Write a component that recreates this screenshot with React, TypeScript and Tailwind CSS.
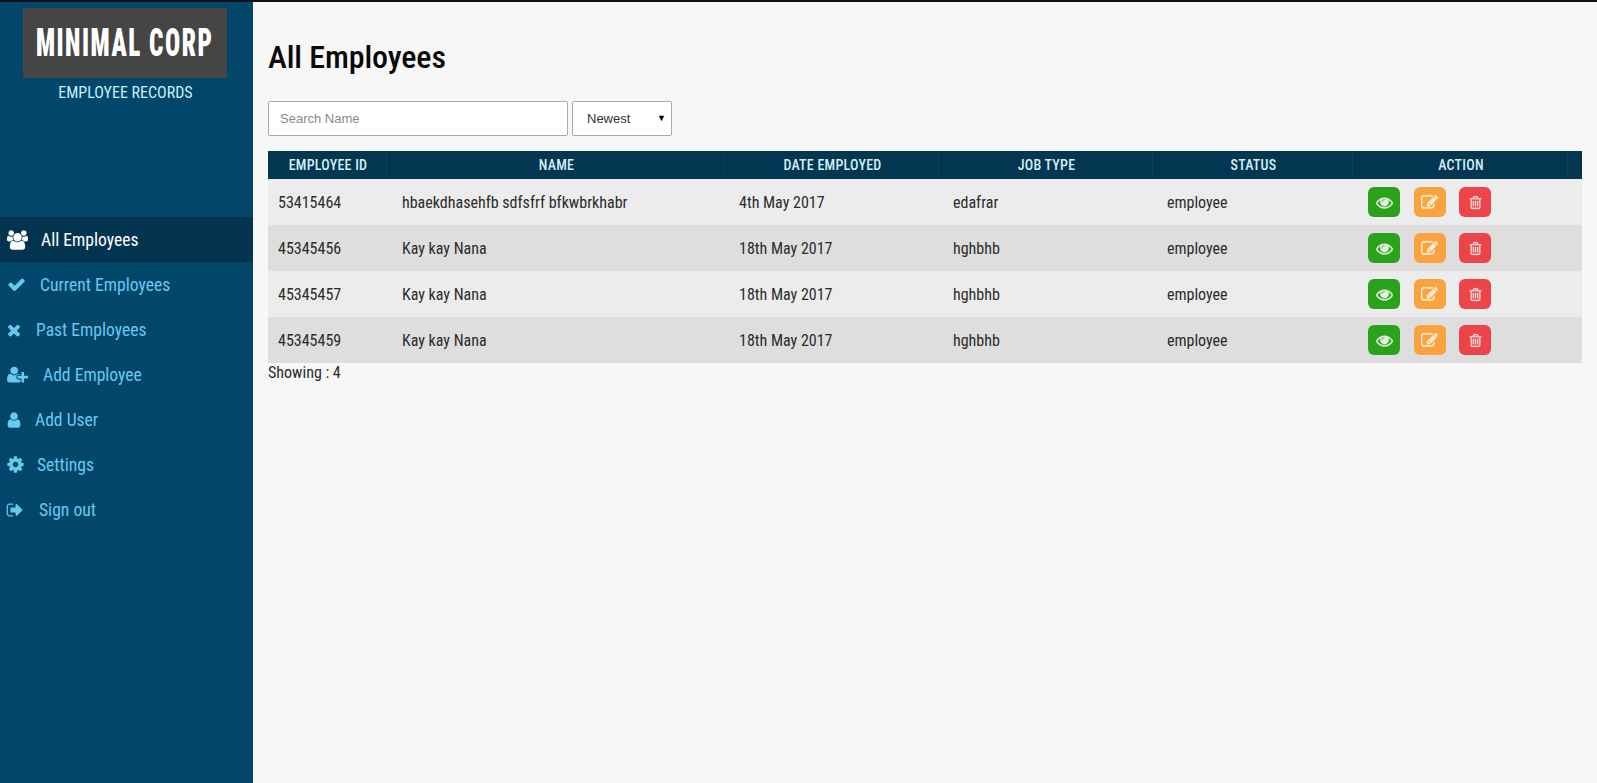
// font awesome 4 glyph shapes, the icon packages only carry the newer ones
const glyphs = {
  users: { w: 1920, d: "M593 896q-162 5-265 128h-134q-82 0-138-40.5t-56-118.5q0-353 124-353 6 0 43.5 21t97.5 42.5 119 21.5q67 0 133-23-5 37-5 66 0 139 81 256zm1071 637q0 120-73 189.5t-194 69.5h-874q-121 0-194-69.5t-73-189.5q0-53 3.5-103.5t14-109 26.5-108.5 43-97.5 62-81 85.5-53.5 111.5-20q10 0 43 21.5t73 48 107 48 135 21.5 135-21.5 107-48 73-48 43-21.5q61 0 111.5 20t85.5 53.5 62 81 43 97.5 26.5 108.5 14 109 3.5 103.5zm-1024-1277q0 106-75 181t-181 75-181-75-75-181 75-181 181-75 181 75 75 181zm704 384q0 159-112.5 271.5t-271.5 112.5-271.5-112.5-112.5-271.5 112.5-271.5 271.5-112.5 271.5 112.5 112.5 271.5zm576 225q0 78-56 118.5t-138 40.5h-134q-103-123-265-128 81-117 81-256 0-29-5-66 66 23 133 23 59 0 119-21.5t97.5-42.5 43.5-21q124 0 124 353zm-128-609q0 106-75 181t-181 75-181-75-75-181 75-181 181-75 181 75 75 181z" },
  check: { w: 1792, d: "M1671 566q0 40-28 68l-724 724-136 136q-28 28-68 28t-68-28l-136-136-362-362q-28-28-28-68t28-68l136-136q28-28 68-28t68 28l294 295 656-657q28-28 68-28t68 28l136 136q28 28 28 68z" },
  times: { w: 1792, d: "M1490 1322q0 40-28 68l-136 136q-28 28-68 28t-68-28l-294-294-294 294q-28 28-68 28t-68-28l-136-136q-28-28-28-68t28-68l294-294-294-294q-28-28-28-68t28-68l136-136q28-28 68-28t68 28l294 294 294-294q28-28 68-28t68 28l136 136q28 28 28 68t-28 68l-294 294 294 294q28 28 28 68z" },
  userPlus: { w: 2048, d: "M704 896q-159 0-271.5-112.5t-112.5-271.5 112.5-271.5 271.5-112.5 271.5 112.5 112.5 271.5-112.5 271.5-271.5 112.5zm960 128h352q13 0 22.5 9.5t9.5 22.5v192q0 13-9.5 22.5t-22.5 9.5h-352v352q0 13-9.5 22.5t-22.5 9.5h-192q-13 0-22.5-9.5t-9.5-22.5v-352h-352q-13 0-22.5-9.5t-9.5-22.5v-192q0-13 9.5-22.5t22.5-9.5h352v-352q0-13 9.5-22.5t22.5-9.5h192q13 0 22.5 9.5t9.5 22.5v352zm-736 224q0 52 38 90t90 38h256v238q-68 50-171 50h-874q-121 0-194-69.5t-73-189.5q0-53 3.5-103.5t14-109 26.5-108.5 43-97.5 62-81 85.5-53.5 111.5-20q19 0 39 17 79 61 154.5 91.5t164.5 30.5 164.5-30.5 154.5-91.5q20-17 39-17 132 0 217 96h-223q-52 0-90 38t-38 90v192z" },
  user: { w: 1792, d: "M1536 1399q0 109-62.5 187t-150.5 78h-854q-88 0-150.5-78t-62.5-187q0-85 8.5-160.5t31.5-152 58.5-131 94-89 134.5-34.5q131 128 313 128t313-128q76 0 134.5 34.5t94 89 58.5 131 31.5 152 8.5 160.5zm-256-887q0 159-112.5 271.5t-271.5 112.5-271.5-112.5-112.5-271.5 112.5-271.5 271.5-112.5 271.5 112.5 112.5 271.5z" },
  cog: { w: 1792, d: "M1152 896q0-106-75-181t-181-75-181 75-75 181 75 181 181 75 181-75 75-181zm512-109v222q0 12-8 23t-20 13l-185 28q-19 54-39 91 35 50 107 138 10 12 10 25t-9 23q-27 37-99 108t-94 71q-12 0-26-9l-138-108q-44 23-91 38-16 136-29 186-7 28-36 28h-222q-14 0-24.5-8.5t-11.5-21.5l-28-184q-49-16-90-37l-141 107q-10 9-25 9-14 0-25-11-126-114-165-168-7-10-7-23 0-12 8-23 15-21 51-66.5t54-70.5q-27-50-41-99l-183-27q-13-2-21-12.5t-8-23.5v-222q0-12 8-23t19-13l186-28q14-46 39-92-40-57-107-138-10-12-10-24 0-10 9-23 26-36 98.5-107.5t94.5-71.5q13 0 26 10l138 107q44-23 91-38 16-136 29-186 7-28 36-28h222q14 0 24.5 8.5t11.5 21.5l28 184q49 16 90 37l142-107q9-9 24-9 13 0 25 10 129 119 165 170 7 8 7 22 0 12-8 23-15 21-51 66.5t-54 70.5q26 50 41 98l183 28q13 2 21 12.5t8 23.5z" },
  signOut: { w: 1792, d: "M704 1440q0 4 1 20t.5 26.5-3 23.5-10 19.5-20.5 6.5h-320q-119 0-203.5-84.5t-84.5-203.5v-704q0-119 84.5-203.5t203.5-84.5h320q13 0 22.5 9.5t9.5 22.5q0 4 1 20t.5 26.5-3 23.5-10 19.5-20.5 6.5h-320q-66 0-113 47t-47 113v704q0 66 47 113t113 47h312l11.5 1 11.5 3 8 5.5 7 9 2 13.5zm928-544q0 26-19 45l-544 544q-19 19-45 19t-45-19-19-45v-288h-448q-26 0-45-19t-19-45v-384q0-26 19-45t45-19h448v-288q0-26 19-45t45-19 45 19l544 544q19 19 19 45z" },
  eye: { w: 1792, d: "M1664 960q-152-236-381-353 61 104 61 225 0 185-131.5 316.5t-316.5 131.5-316.5-131.5-131.5-316.5q0-121 61-225-229 117-381 353 133 205 333.5 326.5t434.5 121.5 434.5-121.5 333.5-326.5zm-720-384q0-20-14-34t-34-14q-125 0-214.5 89.5t-89.5 214.5q0 20 14 34t34 14 34-14 14-34q0-86 61-147t147-61q20 0 34-14t14-34zm848 384q0 34-20 69-140 230-376.5 368.5t-499.5 138.5-499.5-139-376.5-368q-20-35-20-69t20-69q140-229 376.5-368t499.5-139 499.5 139 376.5 368q20 35 20 69z" },
  edit: { w: 1792, d: "M888 1184l116-116-152-152-116 116v56h96v96h56zm440-720q-16-16-33 1l-350 350q-17 17-1 33t33-1l350-350q17-17 1-33zm80 594v190q0 119-84.5 203.5t-203.5 84.5h-832q-119 0-203.5-84.5t-84.5-203.5v-832q0-119 84.5-203.5t203.5-84.5h832q63 0 117 25 15 7 18 23 3 17-9 29l-49 49q-14 14-32 8-23-6-45-6h-832q-66 0-113 47t-47 113v832q0 66 47 113t113 47h832q66 0 113-47t47-113v-126q0-13 9-22l64-64q15-15 35-7t20 29zm-96-738l288 288-672 672h-288v-288zm444 132l-92 92-288-288 92-92q28-28 68-28t68 28l152 152q28 28 28 68t-28 68z" },
  trash: { w: 1792, d: "M704 736v576q0 14-9 23t-23 9h-64q-14 0-23-9t-9-23v-576q0-14 9-23t23-9h64q14 0 23 9t9 23zm256 0v576q0 14-9 23t-23 9h-64q-14 0-23-9t-9-23v-576q0-14 9-23t23-9h64q14 0 23 9t9 23zm256 0v576q0 14-9 23t-23 9h-64q-14 0-23-9t-9-23v-576q0-14 9-23t23-9h64q14 0 23 9t9 23zm128 724v-948h-896v948q0 22 7 40.5t14.5 27 10.5 8.5h832q3 0 10.5-8.5t14.5-27 7-40.5zm-672-1076h448l-48-117q-7-9-17-11h-317q-10 2-17 11zm928 32v64q0 14-9 23t-23 9h-96v948q0 83-47 143.5t-113 60.5h-832q-66 0-113-58.5t-47-141.5v-952h-96q-14 0-23-9t-9-23v-64q0-14 9-23t23-9h309l70-167q15-37 54-63t79-26h320q40 0 79 26t54 63l70 167h309q14 0 23 9t9 23z" },
};

function Glyph({ name, className }: { name: keyof typeof glyphs; className: string }) {
  const g = glyphs[name];
  return (
    <svg viewBox={`0 0 ${g.w} 1792`} fill="currentColor" className={`shrink-0 ${className}`}>
      <path d={g.d} />
    </svg>
  );
}

const navItems = [
  { label: "All Employees", icon: "users", size: "h-[20px] w-[21px]", gap: "ml-[13px]", active: true },
  { label: "Current Employees", icon: "check", size: "h-[19px] w-[19px]", gap: "ml-[14px]" },
  { label: "Past Employees", icon: "times", size: "-ml-[2px] h-[18px] w-[18px]", gap: "ml-[13px]" },
  { label: "Add Employee", icon: "userPlus", size: "h-[19px] w-[21px]", gap: "ml-[15px]" },
  { label: "Add User", icon: "user", size: "-ml-[2.5px] h-[18px] w-[18px]", gap: "ml-[12.5px]" },
  { label: "Settings", icon: "cog", size: "-ml-[1px] h-[19px] w-[19px]", gap: "ml-[12px]" },
  { label: "Sign out", icon: "signOut", size: "-ml-[1.5px] h-[18px] w-[18px]", gap: "ml-[15.5px]" },
] as const;

const rows = [
  { id: "53415464", name: "hbaekdhasehfb sdfsfrf bfkwbrkhabr", date: "4th May 2017", job: "edafrar" },
  { id: "45345456", name: "Kay kay Nana", date: "18th May 2017", job: "hghbhb" },
  { id: "45345457", name: "Kay kay Nana", date: "18th May 2017", job: "hghbhb" },
  { id: "45345459", name: "Kay kay Nana", date: "18th May 2017", job: "hghbhb" },
];

const columns = "grid grid-cols-[119px_338px_214px_214px_200px_215px_14px]";
const headers = ["EMPLOYEE ID", "NAME", "DATE EMPLOYED", "JOB TYPE", "STATUS", "ACTION"];

export default function App() {
  return (
    <div className="flex h-[783px] w-[1597px] overflow-hidden border-t-2 border-[#111] bg-[#f7f7f7] font-['Roboto',sans-serif] [font-stretch:75%]">
      <aside className="flex w-[253px] shrink-0 flex-col bg-[#024769]">
        <div className="ml-[23px] mt-[6px] flex h-[70px] w-[204px] items-center justify-center bg-[#454545]">
          <span className="scale-x-[0.84] scale-y-[1.27] whitespace-nowrap text-[30px] font-black leading-none tracking-[1.8px] text-white">
            MINIMAL CORP
          </span>
        </div>
        <div className="mt-[5px] pr-[2px] text-center text-[16px] leading-[20px] text-[#c8f0f8]">EMPLOYEE RECORDS</div>
        <nav className="mt-[114px] flex flex-col">
          {navItems.map((item) => (
            <div
              key={item.label}
              className={`flex h-[45px] items-center pl-[7px] text-[17.6px] ${"active" in item ? "bg-[#03344f] text-white" : "text-[#68c8f2]"}`}
            >
              <Glyph name={item.icon} className={item.size} />
              <span className={`pt-[2px] ${item.gap}`}>{item.label}</span>
            </div>
          ))}
        </nav>
      </aside>

      <main className="min-w-0 flex-1 px-[15px]">
        <h1 className="mt-[36px] text-[32px] font-[480] leading-[38px] tracking-[-0.1px] text-[#0a0a0a]">All Employees</h1>
        <div className="mt-[25px] flex gap-[4px]">
          <input
            placeholder="Search Name"
            className="h-[35px] w-[300px] rounded-[2px] border border-[#aaa] bg-white px-[11px] font-['Liberation_Sans',sans-serif] text-[13px] [font-stretch:normal] placeholder:text-[#8a8a8a]"
          />
          <div className="flex h-[35px] w-[100px] items-center justify-between rounded-[2px] border border-[#aaa] bg-white pl-[14px] pr-[5px] font-['Liberation_Sans',sans-serif] text-[13px] text-[#333] [font-stretch:normal]">
            <span>Newest</span>
            <span className="text-[9px] text-black">▼</span>
          </div>
        </div>

        <div className="mt-[15px] w-[1314px]">
          <div className={`${columns} h-[28px] items-center bg-[#023651] text-[14px] font-medium tracking-[0.25px] text-[#d3eff6]`}>
            {headers.map((h) => (
              <div key={h} className="flex h-full items-center justify-center border-r border-[#0a4059] pl-[2px]">
                {h}
              </div>
            ))}
          </div>
          {rows.map((r, i) => (
            <div
              key={r.id}
              className={`${columns} h-[46px] items-center pt-[1px] text-[16px] text-[#2b2b2b] ${i % 2 === 0 ? "bg-[#ececec]" : "bg-[#dedede]"}`}
            >
              <div className="pl-[10px]">{r.id}</div>
              <div className="pl-[15px]">{r.name}</div>
              <div className="pl-[14px]">{r.date}</div>
              <div className="pl-[14px]">{r.job}</div>
              <div className="pl-[14px]">employee</div>
              <div className="-mt-[1px] flex gap-[13.5px] pl-[15px]">
                <button className="flex h-[30px] w-[32px] items-center justify-center rounded-[6px] bg-[#2aa21c] text-[#dff2dc]">
                  <Glyph name="eye" className="h-[17px] w-[17px] stroke-current stroke-[40]" />
                </button>
                <button className="flex h-[30px] w-[32px] items-center justify-center rounded-[6px] bg-[#f8a33e] text-[#fdf0df]">
                  <Glyph name="edit" className="h-[17px] w-[17px] stroke-current stroke-[40]" />
                </button>
                <button className="flex h-[30px] w-[32px] items-center justify-center rounded-[6px] bg-[#ec4449] text-[#fbdfe0]">
                  <Glyph name="trash" className="h-[15px] w-[15px] stroke-current stroke-[30]" />
                </button>
              </div>
            </div>
          ))}
          <div className="text-[16px] leading-[20px] text-[#2b2b2b]">Showing : 4</div>
        </div>
      </main>
    </div>
  );
}
